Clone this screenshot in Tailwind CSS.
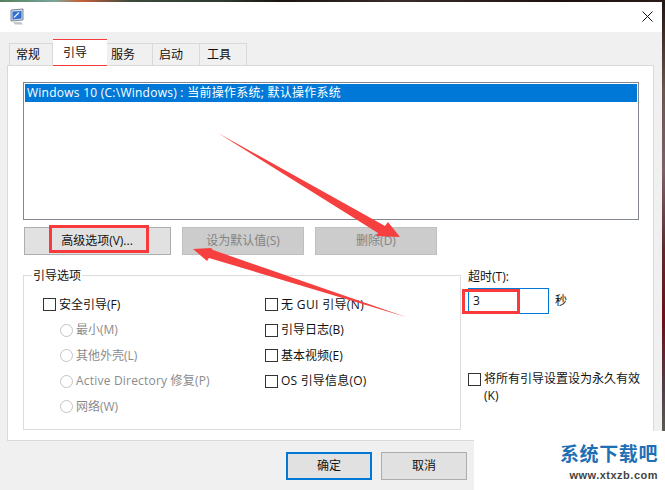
<!DOCTYPE html>
<html>
  <head>
    <meta charset="utf-8" />
    <title>系统配置</title>
    <script src="https://cdn.jsdelivr.net/npm/@tailwindcss/browser@4"></script>
  </head>
  <body class="w-[665px] h-[490px] overflow-hidden bg-[linear-gradient(to_bottom,#1f1714_0px,#3a2a26_30px,#6a5550_90px,#7d6068_170px,#5c2a30_250px,#6b0f18_320px,#50404a_390px,#5f5f50_440px)]">
    <div class="h-[2px] bg-[linear-gradient(to_right,#55805c_0px,#7aa59a_55px,#c8603a_80px,#3c4a3a_130px,#2e3a32_220px,#1a1412_280px,#3a2c2a_400px,#1d1010_560px,#2a1a18_665px)]"></div>
    <div class="relative w-[662px] h-[488px] bg-[#f0f0f0] text-[12px] leading-[16px] text-[#111] font-['Open_Sans','Noto_Sans_CJK_SC',sans-serif]">
      <!-- title bar -->
      <div class="h-[30px] bg-white flex items-center justify-between pl-[9px] pr-[9px]">
        <svg width="16" height="18" viewBox="0 0 16 18">
          <path d="M2 2L14 1V12L2 13Z" fill="#d5dde9" stroke="#7b8798" />
          <path d="M3.5 3.5L12.5 3V10.5L3.5 11.5Z" fill="#2f6fd0" />
          <path d="M5 9.5l5-5" stroke="#dfeaff" stroke-width="1.5" />
          <path d="M4 14h8l2 2.5H6z" fill="#c3c6ca" />
        </svg>
        <svg class="-mt-[1px]" width="11" height="11" viewBox="0 0 11 11">
          <path d="M.5.5l10 10M10.5.5l-10 10" stroke="#111" fill="none" />
        </svg>
      </div>

      <!-- tabs -->
      <div class="flex h-[33px] pl-[9px] pt-[11px] items-stretch">
        <div class="w-[44px] flex items-center pl-[6px] border border-b-0 border-[#d9d9d9]">常规</div>
        <div class="w-[54px] -mt-[3px] bg-white flex items-center pl-[10px] z-10">引导</div>
        <div class="w-[46px] flex items-center pl-[4px] border border-l-0 border-b-0 border-[#d9d9d9]">服务</div>
        <div class="w-[47px] flex items-center pl-[6px] border border-l-0 border-b-0 border-[#d9d9d9]">启动</div>
        <div class="w-[47px] flex items-center pl-[7px] border border-l-0 border-b-0 border-[#d9d9d9]">工具</div>
      </div>

      <!-- panel -->
      <div class="ml-[7px] mr-[8px] h-[376px] bg-white border border-[#d9d9d9] pt-[16px] px-[15px]">
        <div class="w-[616px] h-[138px] border border-[#828790] p-[1px]">
          <div class="h-[18px] bg-[#0078d7] text-white pl-[2px] flex items-center whitespace-nowrap tracking-[0.25px]">Windows 10 (C:\Windows) : 当前操作系统; 默认操作系统</div>
        </div>

        <div class="flex mt-[7px] ml-[1px] gap-[11px]">
          <div class="w-[147px] h-[28px] bg-[#e1e1e1] border border-[#adadad] flex items-center justify-center pr-[1px]">高级选项(V)...</div>
          <div class="w-[122px] h-[28px] bg-[#cccccc] border border-[#bfbfbf] flex items-center justify-center text-[#838383]">设为默认值(S)</div>
          <div class="w-[122px] h-[28px] bg-[#cccccc] border border-[#bfbfbf] flex items-center justify-center text-[#838383]">删除(D)</div>
        </div>

        <div class="flex mt-[20px]">
          <div class="relative shrink-0 w-[438px] h-[155px] border border-[#dcdcdc] pt-[16px] pl-[19px]">
            <div class="absolute left-[8px] -top-[8px] bg-white px-[1px]">引导选项</div>
            <div class="flex">
              <div class="w-[222px] flex flex-col">
                <label class="flex items-center gap-[3px] h-[25px]"><span class="w-[13px] h-[13px] border border-[#333]"></span>安全引导(F)</label>
                <div class="flex flex-col pl-[17px] text-[#8b8b8b]">
                  <label class="flex items-center gap-[3px] h-[26px]"><span class="w-[13px] h-[13px] rounded-full border border-[#c4c4c4]"></span>最小(M)</label>
                  <label class="flex items-center gap-[3px] h-[25px]"><span class="w-[13px] h-[13px] rounded-full border border-[#c4c4c4]"></span>其他外壳(L)</label>
                  <label class="flex items-center gap-[3px] h-[26px]"><span class="w-[13px] h-[13px] rounded-full border border-[#c4c4c4]"></span><span class="tracking-[0.2px]">Active Directory 修复(P)</span></label>
                  <label class="flex items-center gap-[3px] h-[25px]"><span class="w-[13px] h-[13px] rounded-full border border-[#c4c4c4]"></span>网络(W)</label>
                </div>
              </div>
              <div class="flex flex-col">
                <label class="flex items-center gap-[3px] h-[25px]"><span class="w-[13px] h-[13px] border border-[#333]"></span><span class="tracking-[0.35px]">无 GUI 引导(N)</span></label>
                <label class="flex items-center gap-[3px] h-[26px]"><span class="w-[13px] h-[13px] border border-[#333]"></span>引导日志(B)</label>
                <label class="flex items-center gap-[3px] h-[25px]"><span class="w-[13px] h-[13px] border border-[#333]"></span>基本视频(E)</label>
                <label class="flex items-center gap-[3px] h-[26px]"><span class="w-[13px] h-[13px] border border-[#333]"></span><span class="tracking-[0.2px]">OS 引导信息(O)</span></label>
              </div>
            </div>
          </div>

          <div class="ml-[7px] w-[172px] shrink-0 -mt-[6px]">
            <div class="h-[16px]">超时(T):</div>
            <div class="flex items-center mt-[3px]">
              <div class="w-[81px] h-[26px] border border-[#0078d7] pl-[4px] flex items-center">3</div>
              <span class="ml-[6px]">秒</span>
            </div>
            <label class="flex gap-[3px] mt-[56px] leading-[17px]"><span class="shrink-0 w-[13px] h-[13px] border border-[#333] mt-[3px]"></span><span class="shrink-0 w-[158px]">将所有引导设置设为永久有效(K)</span></label>
          </div>
        </div>
      </div>

      <!-- footer buttons -->
      <div class="flex justify-start pl-[286px] pt-[11px] gap-[9px]">
        <div class="w-[86px] h-[28px] bg-[#e1e1e1] border-2 border-[#0078d7] flex items-center justify-center">确定</div>
        <div class="w-[86px] h-[28px] bg-[#e1e1e1] border border-[#adadad] flex items-center justify-center">取消</div>
      </div>

      <!-- annotations over the screenshot -->
      <div class="absolute left-[53px] top-[37px] w-[54px] h-[27px] border-[3px] border-[#f93a3d]"></div>
      <div class="absolute left-[49px] top-[223px] w-[100px] h-[28px] border-[3px] border-[#f93a3d]"></div>
      <div class="absolute left-[462px] top-[287px] w-[58px] h-[25px] border-[3px] border-[#f93a3d]"></div>
      <svg class="absolute left-0 -top-[2px]" width="665" height="490" viewBox="0 0 665 490">
        <path d="M218 133L385 226L388 222L400 237L376 236L378 233Z" fill="#f5403f" />
        <path d="M406 317L213 250L211 248L193 249L207 261L209 258Z" fill="#f5403f" />
      </svg>

      <!-- watermark -->
      <div class="absolute left-[474px] top-[429px] w-[191px] h-[59px] bg-white flex flex-col items-end pr-[7px] pt-[10px]">
        <div class="text-[19px] leading-[24px] font-bold text-[#1f6fb5] tracking-[0.6px] font-['Noto_Sans_CJK_SC',sans-serif]">系统下载吧</div>
        <div class="text-[11px] leading-[14px] font-bold text-[#444] mt-[3px] font-['Liberation_Sans',sans-serif] tracking-[0.5px]">www.xtxzb.com</div>
      </div>
    </div>
  </body>
</html>
